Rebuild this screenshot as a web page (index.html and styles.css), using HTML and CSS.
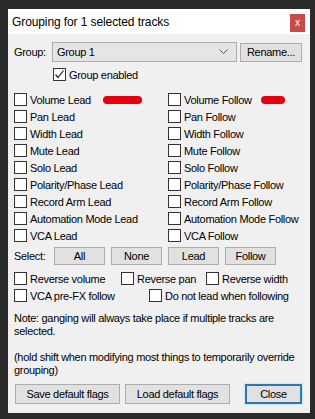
FILE: index.html
```html
<!DOCTYPE html>
<html lang="en">
<head>
    <meta charset="UTF-8">
    <title>Grouping for 1 selected tracks</title>
    <link rel="stylesheet" href="styles.css">
</head>
<body>
    <div class="window">
        <div class="titlebar">
            <span class="title">Grouping for 1 selected tracks</span>
            <span class="close">x</span>
        </div>

        <div class="content">
            <div class="group-row">
                <span class="label">Group:</span>
                <div class="combo">
                    <span>Group 1</span>
                    <svg width="9" height="6" viewBox="0 0 9 6"><path d="M0.5 0.5 L4.5 4.5 L8.5 0.5" fill="none" stroke="#555" stroke-width="1"/></svg>
                </div>
                <button class="btn rename">Rename...</button>
            </div>

            <label class="opt enabled">
                <span class="cb"><svg width="11" height="11" viewBox="0 0 11 11"><path d="M1.5 5.5 L4 8.5 L9.5 1.5" fill="none" stroke="#222" stroke-width="1.2"/></svg></span>
                Group enabled
            </label>

            <div class="flags">
                <label class="opt"><span class="cb"></span>Volume Lead<span class="redact left"></span></label>
                <label class="opt"><span class="cb"></span>Volume Follow<span class="redact right"></span></label>
                <label class="opt"><span class="cb"></span>Pan Lead</label>
                <label class="opt"><span class="cb"></span>Pan Follow</label>
                <label class="opt"><span class="cb"></span>Width Lead</label>
                <label class="opt"><span class="cb"></span>Width Follow</label>
                <label class="opt"><span class="cb"></span>Mute Lead</label>
                <label class="opt"><span class="cb"></span>Mute Follow</label>
                <label class="opt"><span class="cb"></span>Solo Lead</label>
                <label class="opt"><span class="cb"></span>Solo Follow</label>
                <label class="opt"><span class="cb"></span>Polarity/Phase Lead</label>
                <label class="opt"><span class="cb"></span>Polarity/Phase Follow</label>
                <label class="opt"><span class="cb"></span>Record Arm Lead</label>
                <label class="opt"><span class="cb"></span>Record Arm Follow</label>
                <label class="opt"><span class="cb"></span>Automation Mode Lead</label>
                <label class="opt"><span class="cb"></span>Automation Mode Follow</label>
                <label class="opt"><span class="cb"></span>VCA Lead</label>
                <label class="opt"><span class="cb"></span>VCA Follow</label>
            </div>

            <div class="select-row">
                <span class="label">Select:</span>
                <button class="btn sel">All</button>
                <button class="btn sel">None</button>
                <button class="btn sel">Lead</button>
                <button class="btn sel">Follow</button>
            </div>

            <div class="opt-row">
                <label class="opt w107"><span class="cb"></span>Reverse volume</label>
                <label class="opt w85"><span class="cb"></span>Reverse pan</label>
                <label class="opt"><span class="cb"></span>Reverse width</label>
            </div>
            <div class="opt-row">
                <label class="opt w135"><span class="cb"></span>VCA pre-FX follow</label>
                <label class="opt"><span class="cb"></span>Do not lead when following</label>
            </div>

            <p class="note first">Note: ganging will always take place if multiple tracks are<br>selected.</p>
            <p class="note">(hold shift when modifying most things to temporarily override<br>grouping)</p>

            <div class="footer">
                <button class="btn wide">Save default flags</button>
                <button class="btn wide">Load default flags</button>
                <button class="btn close-btn">Close</button>
            </div>
        </div>
    </div>
</body>
</html>
```

FILE: styles.css
```css
* {
    margin: 0;
    padding: 0;
    box-sizing: border-box;
}
body {
    background: #2b2b2b;
    font-family: "Liberation Sans", Arial, sans-serif;
    font-size: 11px;
    letter-spacing: -0.3px;
    color: #000;
    width: 315px;
    height: 419px;
    overflow: hidden;
}
.window {
    margin: 9px 0 0 8px;
    width: 302px;
    height: 404px;
    background: #f0f0f0;
    display: flex;
    flex-direction: column;
}
.titlebar {
    height: 25px;
    background: #fff;
    display: flex;
    align-items: center;
    justify-content: space-between;
    padding: 0 5px 0 4px;
}
.title {
    font-size: 12px;
    letter-spacing: -0.1px;
}
.close {
    width: 15px;
    height: 18px;
    background: #c94a4b;
    color: #fff;
    font-size: 10px;
    letter-spacing: 0;
    display: flex;
    align-items: center;
    justify-content: center;
    margin-top: 2px;
}
.content {
    padding: 8px 8px 0 6px;
    display: flex;
    flex-direction: column;
}
.label {
    white-space: nowrap;
}
.group-row {
    display: flex;
    align-items: center;
    height: 20px;
}
.group-row .label {
    width: 38px;
}
.combo {
    width: 185px;
    height: 20px;
    background: #e5e5e5;
    border: 1px solid #acacac;
    display: flex;
    align-items: center;
    justify-content: space-between;
    padding: 0 8px 0 4px;
    margin-right: 3px;
}
.btn {
    font-family: inherit;
    font-size: 11px;
    letter-spacing: inherit;
    color: #000;
    background: #e1e1e1;
    border: 1px solid #adadad;
    display: flex;
    align-items: center;
    justify-content: center;
}
.rename {
    width: 62px;
    height: 19px;
}
.opt {
    display: flex;
    align-items: center;
    white-space: nowrap;
    position: relative;
    height: 17px;
}
.cb {
    width: 13px;
    height: 13px;
    border: 1px solid #333;
    background: #fff;
    margin-right: 3px;
    flex-shrink: 0;
    display: flex;
    align-items: center;
    justify-content: center;
}
.enabled {
    margin: 4px 0 0 39px;
}
.flags {
    margin-top: 8px;
    display: grid;
    grid-template-columns: 154px 1fr;
    grid-auto-rows: 17px;
}
.redact {
    position: absolute;
    top: 5px;
    height: 8px;
    border-radius: 4px;
    background: #e5000b;
}
.redact.left {
    left: 89px;
    width: 39px;
}
.redact.right {
    left: 93px;
    width: 24px;
}
.select-row {
    display: flex;
    align-items: center;
    gap: 6px;
    margin-top: 3px;
    height: 18px;
}
.select-row .label {
    width: 34px;
}
.sel {
    width: 51px;
    height: 18px;
}
.select-row + .opt-row {
    margin-top: 5px;
}
.opt-row {
    display: flex;
}
.w107 {
    width: 107px;
}
.w85 {
    width: 85px;
}
.w135 {
    width: 135px;
}
.note {
    line-height: 12.5px;
    white-space: nowrap;
    margin-top: 14px;
}
.note.first {
    margin-top: 8px;
}
.footer {
    display: flex;
    margin-top: 8px;
    padding-left: 1px;
}
.wide {
    width: 105px;
    height: 20px;
    margin-right: 5px;
}
.close-btn {
    width: 57px;
    height: 20px;
    margin-left: 10px;
    border: 2px solid #2f77ad;
    box-shadow: 0 0 0 1px #cfe6f6;
}
```
